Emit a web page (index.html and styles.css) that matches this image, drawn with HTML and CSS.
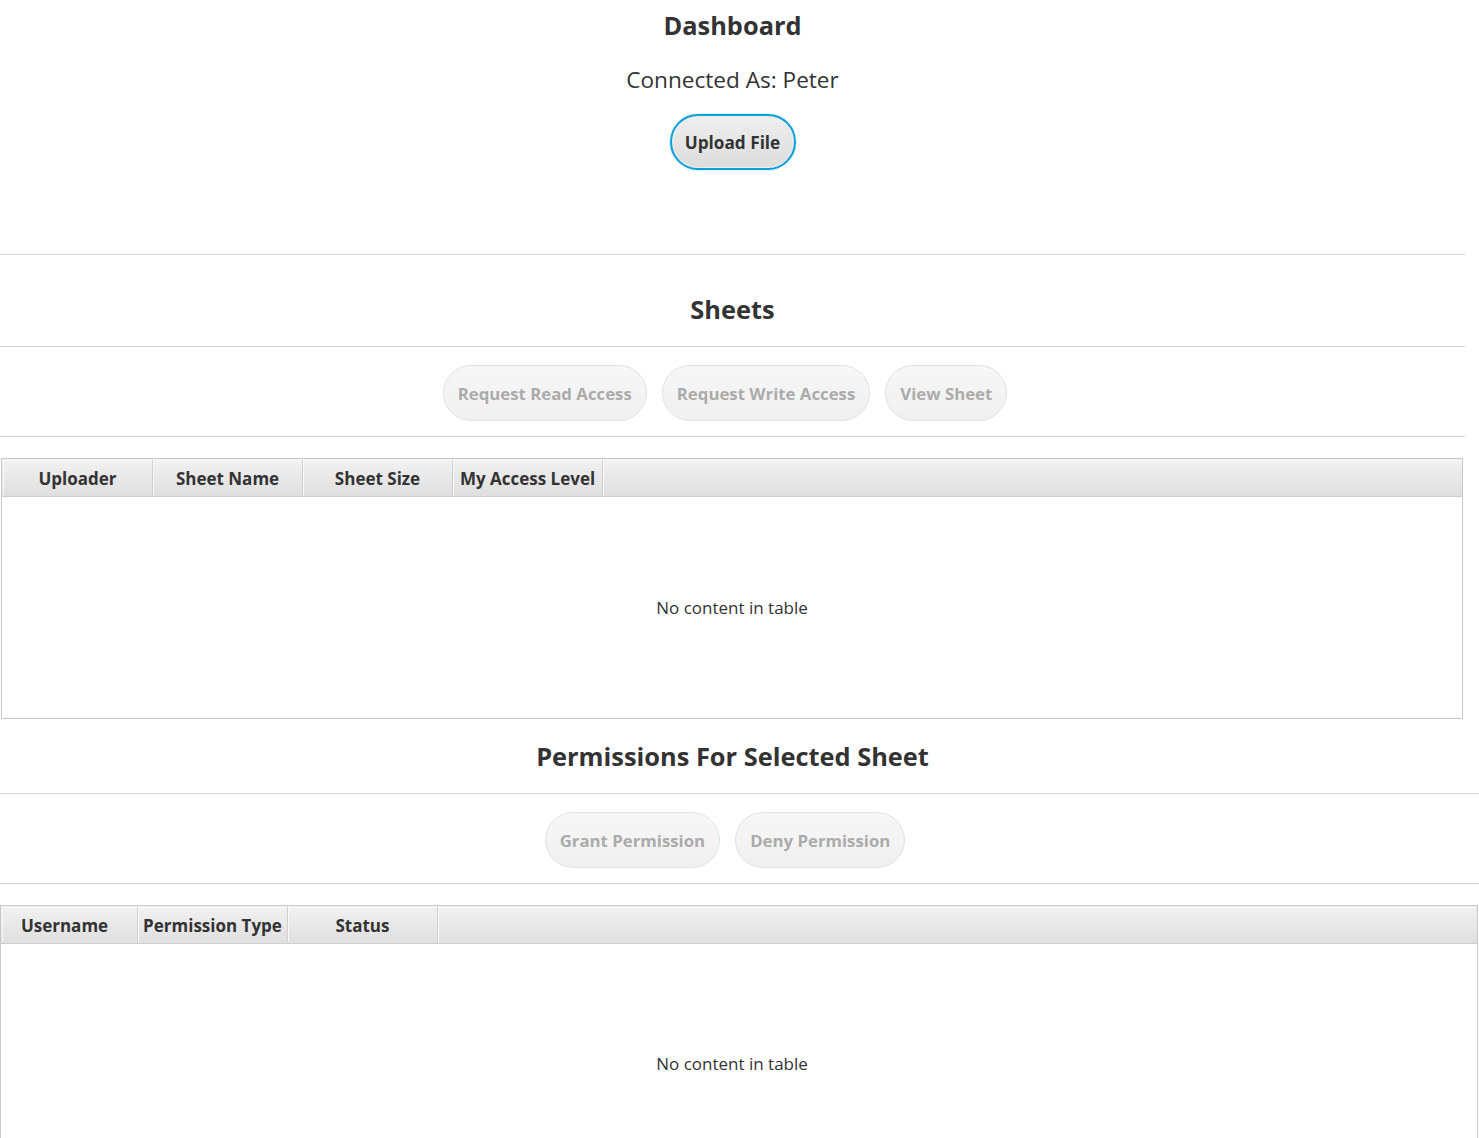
FILE: index.html
```html
<!DOCTYPE html>
<html lang="en">
<head>
<meta charset="utf-8">
<title>Dashboard</title>
<link rel="stylesheet" href="styles.css">
</head>
<body>
<div class="page">
  <header class="top">
    <h1 class="title">Dashboard</h1>
    <div class="connected">Connected As: Peter</div>
    <button class="btn btn-focus">Upload File</button>
  </header>
  <hr class="sep">
  <h2 class="sec-title sec-sheets">Sheets</h2>
  <hr class="sep">
  <div class="btn-row">
    <button class="btn btn-disabled">Request Read Access</button>
    <button class="btn btn-disabled">Request Write Access</button>
    <button class="btn btn-disabled">View Sheet</button>
  </div>
  <hr class="sep">
  <div class="table table-sheets">
    <div class="thead">
      <div class="th">Uploader</div>
      <div class="th">Sheet Name</div>
      <div class="th">Sheet Size</div>
      <div class="th">My Access Level</div>
      <div class="th th-fill"></div>
    </div>
    <div class="tbody">No content in table</div>
  </div>
  <h2 class="sec-title sec-perm">Permissions For Selected Sheet</h2>
  <hr class="sep sep-wide">
  <div class="btn-row">
    <button class="btn btn-disabled">Grant Permission</button>
    <button class="btn btn-disabled">Deny Permission</button>
  </div>
  <hr class="sep sep-wide">
  <div class="table table-perm">
    <div class="thead">
      <div class="th th-user">Username</div>
      <div class="th">Permission Type</div>
      <div class="th">Status</div>
      <div class="th th-fill"></div>
    </div>
    <div class="tbody">No content in table</div>
  </div>
</div>
</body>
</html>
```
FILE: styles.css
```css
* { box-sizing: border-box; }
html, body {
  margin: 0;
  padding: 0;
  background: #ffffff;
  overflow: hidden;
}
body {
  font-family: "Open Sans", "Noto Sans", "Liberation Sans", sans-serif;
  color: #333333;
}
.page {
  width: 1465px;
  height: 1138px;
}
.top {
  height: 254px;
  display: flex;
  flex-direction: column;
  align-items: center;
}
.title {
  margin: 8px 0 0;
  font-size: 25.4px;
  font-weight: 700;
  line-height: 34px;
  color: #333;
}
.connected {
  margin-top: 23px;
  font-size: 22.6px;
  line-height: 30px;
  color: #333;
}
.btn {
  font-family: inherit;
  font-size: 16.8px;
  font-weight: 700;
  height: 56px;
  padding: 0 14px;
  border-radius: 28px;
  cursor: default;
  white-space: nowrap;
}
.btn-focus {
  margin-top: 19px;
  color: #333;
  border: 2px solid #0ba0d8;
  background: linear-gradient(#efefef, #dcdcdc);
  box-shadow: 0 0 0 1px rgba(11,160,216,0.15), inset 0 0 0 1px #e8eef2;
  width: 126px;
  padding: 0;
  font-size: 17.2px;
}
.btn-disabled {
  color: #ababab;
  border: 1px solid #e1e1e1;
  background: linear-gradient(#f7f7f7, #f0f0f0);
}
.sep {
  margin: 0;
  border: 0;
  height: 1px;
  background: #d3d3d3;
  width: 1465px;
}
.sep-wide { width: 1479px; }
.sec-title {
  margin: 0;
  text-align: center;
  font-size: 25.4px;
  font-weight: 700;
  line-height: 34px;
  color: #333;
}
.sec-sheets { height: 91px; padding-top: 37px; }
.sec-perm { height: 74px; padding-top: 20px; }
.btn-row {
  height: 89px;
  padding: 18px 15px 0 0;
  display: flex;
  justify-content: center;
  align-items: flex-start;
  gap: 15px;
}
.table {
  border: 1px solid #c8c8c8;
  display: flex;
  flex-direction: column;
}
.table-sheets {
  margin: 21px 0 0 1px;
  width: 1462px;
  height: 261px;
}
.table-perm {
  margin: 21px 0 0 0;
  width: 1478px;
  height: 260px;
}
.thead {
  display: flex;
  height: 38px;
  padding: 1px;
  border-bottom: 1px solid #cfcfcf;
  background: linear-gradient(#f2f2f2, #dfdfdf);
}
.th {
  width: 150px;
  flex: none;
  display: flex;
  align-items: center;
  justify-content: center;
  padding-top: 1px;
  font-size: 17px;
  font-weight: 700;
  color: #333;
  border-right: 1px solid #d0d0d0;
  box-shadow: inset 1px 1px 0 #f8f8f8;
  white-space: nowrap;
}
.th-user { width: 136px; padding-right: 10px; }
.th-fill { flex: 1; border-right: 0; }
.tbody {
  flex: 1;
  display: flex;
  align-items: center;
  justify-content: center;
  font-size: 17px;
  color: #333;
}
.table-perm .tbody {
  align-items: flex-start;
  padding-top: 108px;
  padding-right: 14px;
}
```
